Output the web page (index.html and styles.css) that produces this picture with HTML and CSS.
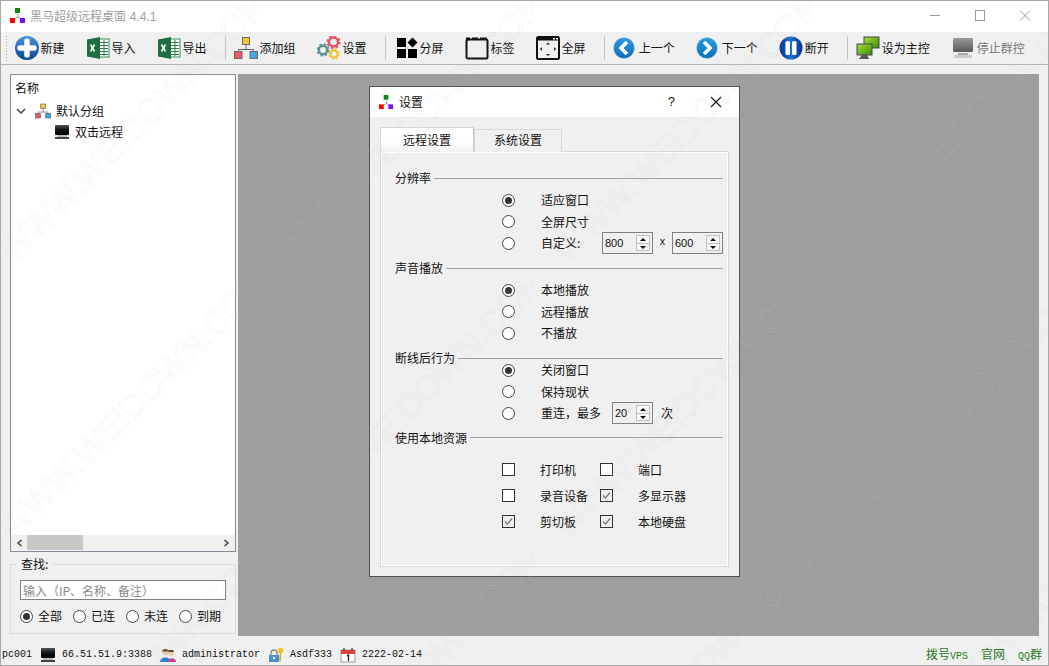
FILE: index.html
```html
<!DOCTYPE html>
<html lang="zh-CN">
<head>
<meta charset="utf-8">
<title>黑马超级远程桌面 4.4.1</title>
<link rel="stylesheet" href="styles.css">
</head>
<body>
<svg class="defs" width="0" height="0" aria-hidden="true">
  <defs>
    <linearGradient id="gPlus" x1="0" y1="0" x2="0" y2="1"><stop offset="0" stop-color="#4a93dc"/><stop offset="1" stop-color="#0b4690"/></linearGradient>
    <linearGradient id="gNav" x1="0" y1="0" x2="0" y2="1"><stop offset="0" stop-color="#2a9be0"/><stop offset="1" stop-color="#0a70b8"/></linearGradient>
    <linearGradient id="gPause" x1="0" y1="0" x2="1" y2="0"><stop offset="0" stop-color="#0a2f90"/><stop offset=".5" stop-color="#1a72d0"/><stop offset="1" stop-color="#07308c"/></linearGradient>
    <linearGradient id="gScreen" x1="0" y1="0" x2="1" y2="1"><stop offset="0" stop-color="#a4e02a"/><stop offset="1" stop-color="#3f8a10"/></linearGradient>
    <linearGradient id="gBlack" x1="0" y1="0" x2="0" y2="1"><stop offset="0" stop-color="#555"/><stop offset=".5" stop-color="#111"/><stop offset="1" stop-color="#000"/></linearGradient>
    <linearGradient id="gGrey" x1="0" y1="0" x2="0" y2="1"><stop offset="0" stop-color="#9a9a9a"/><stop offset="1" stop-color="#5a5a5a"/></linearGradient>
    <symbol id="logo" viewBox="0 0 16 16">
      <path d="M8 6v3M8 9L4 11M8 9l4 2" stroke="#999" fill="none"/>
      <rect x="5" y="0" width="5" height="5" fill="#0a8a0a"/>
      <rect x="0" y="10" width="5" height="5" fill="#f00"/>
      <rect x="10" y="10" width="5" height="5" fill="#7a10f0"/>
    </symbol>
    <symbol id="excel" viewBox="0 0 24 24">
      <rect x="11" y="3" width="12" height="18" fill="#fff" stroke="#3a8a5a"/>
      <path d="M14 6.500h8M14 9.500h8M14 12.500h8M14 15.500h8M14 18.500h8M18 4v16" stroke="#2f7d4f"/>
      <path d="M1 3.500L14 1v22L1 20.500z" fill="#1f6e42"/>
      <path d="M4.500 8.500l4 7M8.500 8.500l-4 7" stroke="#fff" stroke-width="1.600" fill="none"/>
    </symbol>
    <symbol id="net" viewBox="0 0 24 24">
      <path d="M12 8v6M4.500 15v-1.500h15V15" fill="none" stroke="#666"/>
      <rect x="8.500" y="1.500" width="7" height="7" fill="#f8c52c" stroke="#6a6a6a"/>
      <rect x="0.500" y="15.500" width="7.500" height="7" fill="#f0566a" stroke="#6a6a6a"/>
      <rect x="16" y="15.500" width="7.500" height="7" fill="#3aa8f0" stroke="#6a6a6a"/>
    </symbol>
    <symbol id="monitor" viewBox="0 0 16 16">
      <rect x="1" y="1" width="14" height="10" rx="1" fill="url(#gBlack)"/>
      <rect x="3" y="11" width="10" height="2" fill="#bbb"/>
      <rect x="1" y="13" width="14" height="2" fill="#444"/>
    </symbol>
    <symbol id="chev" viewBox="0 0 24 24">
      <circle cx="11" cy="12" r="10.500" fill="url(#gNav)" stroke="#bcd" stroke-width=".6"/>
      <path d="M14 6l-6 6 6 6" fill="none" stroke="#fff" stroke-width="3.600"/>
    </symbol>
    <pattern id="wmark" x="-20" y="0" width="277" height="277" patternUnits="userSpaceOnUse">
      <text class="wm-dark" x="33.600" y="263.800" transform="rotate(-45 33.600 263.800)">WWW.WEIDOWN.COM</text>
      <text class="wm-light" x="33" y="263" transform="rotate(-45 33 263)">WWW.WEIDOWN.COM</text>
    </pattern>
  </defs>
</svg>

<div class="win">
  <header class="titlebar">
    <svg class="title-logo" width="16" height="16"><use href="#logo"/></svg>
    <span class="title-text">黑马超级远程桌面 <span class="title-ver">4.4.1</span></span>
    <div class="wincontrols">
      <svg width="12" height="12" viewBox="0 0 12 12"><path d="M1 5.500h10" stroke="#999"/></svg>
      <svg width="12" height="12" viewBox="0 0 12 12"><rect x="1.500" y="0.500" width="9" height="10" fill="none" stroke="#999"/></svg>
      <svg width="12" height="12" viewBox="0 0 12 12"><path d="M1 0.500l10 10M11 0.500l-10 10" stroke="#999"/></svg>
    </div>
  </header>

  <nav class="toolbar">
    <span class="grip"></span>
    <div class="tool"><svg width="24" height="24" viewBox="0 0 24 24"><circle cx="12" cy="12" r="12" fill="url(#gPlus)"/><path d="M12 5v14M5 12h14" stroke="#fff" stroke-width="5.500" stroke-linecap="round"/></svg><span>新建</span></div>
    <div class="tool"><svg width="24" height="24"><use href="#excel"/></svg><span>导入</span></div>
    <div class="tool"><svg width="24" height="24"><use href="#excel"/></svg><span>导出</span></div>
    <i class="sep"></i>
    <div class="tool"><svg width="24" height="24"><use href="#net"/></svg><span>添加组</span></div>
    <div class="tool"><svg width="24" height="24" viewBox="0 0 24 24">
      <circle cx="16.500" cy="6" r="4.500" fill="none" stroke="#e8505f" stroke-width="2.400"/><circle cx="16.500" cy="6" r="6.200" fill="none" stroke="#e8505f" stroke-width="1.800" stroke-dasharray="2.400 2.450"/>
      <circle cx="6" cy="14" r="4.200" fill="none" stroke="#5a9098" stroke-width="2.400"/><circle cx="6" cy="14" r="5.800" fill="none" stroke="#5a9098" stroke-width="1.600" stroke-dasharray="2.300 2.260"/>
      <circle cx="17" cy="18" r="3.500" fill="none" stroke="#f6c62e" stroke-width="2.200"/><circle cx="17" cy="18" r="5" fill="none" stroke="#f6c62e" stroke-width="1.500" stroke-dasharray="2 1.930"/>
    </svg><span>设置</span></div>
    <i class="sep sep-wide"></i>
    <div class="tool"><svg width="22" height="24" viewBox="0 0 22 24"><rect x="1" y="2" width="9" height="9"/><rect x="1" y="13" width="9" height="9"/><rect x="12" y="13" width="9" height="9"/><path d="M16.500 1.500l5 5-5 5-5-5z"/></svg><span>分屏</span></div>
    <div class="tool"><svg width="24" height="24" viewBox="0 0 24 24"><rect x="1.500" y="3.500" width="21" height="19" rx="1.500" fill="none" stroke="#111" stroke-width="2"/><path d="M1 5V1.500h4V4zM7 1.500h6V4H7zM15 1.500h7V4h-7z" fill="#111"/></svg><span>标签</span></div>
    <div class="tool"><svg width="24" height="24" viewBox="0 0 24 24"><rect x="1" y="1" width="22" height="22" rx="1.500" fill="none" stroke="#111" stroke-width="2"/><rect x="1" y="1" width="22" height="3.500" fill="#111"/><rect x="17" y="2" width="2" height="1.500" fill="#fff"/><rect x="20" y="2" width="2" height="1.500" fill="#fff"/><path d="M12 6.500l2 2h-4zM12 20l2-2h-4zM4 13l2-2v4zM20 13l-2-2v4z" fill="#222"/></svg><span>全屏</span></div>
    <i class="sep"></i>
    <div class="tool"><svg width="24" height="24"><use href="#chev"/></svg><span>上一个</span></div>
    <div class="tool"><svg width="24" height="24" viewBox="0 0 24 24"><circle cx="11" cy="12" r="10.500" fill="url(#gNav)" stroke="#bcd" stroke-width=".6"/><path d="M8 6l6 6-6 6" fill="none" stroke="#fff" stroke-width="3.600"/></svg><span>下一个</span></div>
    <div class="tool"><svg width="24" height="24" viewBox="0 0 24 24"><circle cx="12" cy="12" r="11.500" fill="url(#gPause)"/><rect x="6.500" y="5" width="4.500" height="14" rx="1.500" fill="#fff"/><rect x="13" y="5" width="4.500" height="14" rx="1.500" fill="#fff"/></svg><span>断开</span></div>
    <i class="sep"></i>
    <div class="tool"><svg width="24" height="24" viewBox="0 0 24 24"><rect x="8" y="1" width="15" height="11" fill="url(#gScreen)" stroke="#445"/><rect x="1" y="8" width="15" height="11" fill="url(#gScreen)" stroke="#445"/><path d="M6 19h5l2 4H3z" fill="#555"/></svg><span>设为主控</span></div>
    <div class="tool tool-off"><svg width="24" height="24" viewBox="0 0 24 24"><rect x="2" y="2" width="20" height="14" rx="1.500" fill="url(#gGrey)"/><rect x="7" y="17" width="10" height="2" fill="#aaa"/><rect x="3" y="19" width="18" height="3" fill="#ccc"/></svg><span>停止群控</span></div>
  </nav>

  <main class="main">
    <aside class="side">
      <section class="tree">
        <div class="tree-body">
          <div class="tree-head">名称</div>
          <div class="tree-row">
            <svg class="tree-chev" width="10" height="10" viewBox="0 0 10 10"><path d="M1 3l4 4 4-4" fill="none" stroke="#444" stroke-width="1.500"/></svg>
            <svg class="tree-net" width="16" height="16"><use href="#net"/></svg>
            <span>默认分组</span>
          </div>
          <div class="tree-row tree-child">
            <svg width="16" height="16"><use href="#monitor"/></svg>
            <span>双击远程</span>
          </div>
        </div>
        <div class="hscroll">
          <svg width="7" height="8" viewBox="0 0 7 8"><path d="M5.500 1L2 4l3.500 3" fill="none" stroke="#444" stroke-width="1.500"/></svg>
          <span class="hthumb"></span>
          <svg width="7" height="8" viewBox="0 0 7 8"><path d="M1.500 1L5 4 1.500 7" fill="none" stroke="#444" stroke-width="1.500"/></svg>
        </div>
      </section>
      <fieldset class="find">
        <legend>查找:</legend>
        <input class="find-input" type="text" placeholder="输入（IP、名称、备注）">
        <div class="find-opts">
          <label class="find-opt"><span class="radio on"></span>全部</label>
          <label class="find-opt"><span class="radio"></span>已连</label>
          <label class="find-opt"><span class="radio"></span>未连</label>
          <label class="find-opt"><span class="radio"></span>到期</label>
        </div>
      </fieldset>
    </aside>

    <div class="canvas">
      <div class="dialog">
        <div class="dlg-title">
          <svg width="15" height="15"><use href="#logo"/></svg>
          <span class="dlg-name">设置</span>
          <span class="dlg-help">?</span>
          <svg class="dlg-close" width="12" height="12" viewBox="0 0 12 12"><path d="M1 1l10 10M11 1L1 11" stroke="#111" stroke-width="1.100"/></svg>
        </div>
        <div class="dlg-body">
          <div class="tabs">
            <span class="tab tab-on">远程设置</span>
            <span class="tab">系统设置</span>
          </div>
          <div class="pane">
            <h3 class="sect">分辨率</h3>
            <div class="row"><span class="radio on"></span><span>适应窗口</span></div>
            <div class="row"><span class="radio"></span><span>全屏尺寸</span></div>
            <div class="row"><span class="radio"></span><span class="lbl-custom">自定义:</span>
              <span class="spin"><b>800</b><span class="spin-btn"><i class="up"></i><i class="down"></i></span></span>
              <span class="times">x</span>
              <span class="spin"><b>600</b><span class="spin-btn"><i class="up"></i><i class="down"></i></span></span>
            </div>

            <h3 class="sect">声音播放</h3>
            <div class="row"><span class="radio on"></span><span>本地播放</span></div>
            <div class="row"><span class="radio"></span><span>远程播放</span></div>
            <div class="row"><span class="radio"></span><span>不播放</span></div>

            <h3 class="sect">断线后行为</h3>
            <div class="row row-tight"><span class="radio on"></span><span>关闭窗口</span></div>
            <div class="row"><span class="radio"></span><span>保持现状</span></div>
            <div class="row"><span class="radio"></span><span class="lbl-retry">重连，最多</span>
              <span class="spin spin-small"><b>20</b><span class="spin-btn"><i class="up"></i><i class="down"></i></span></span>
              <span class="times-cn">次</span>
            </div>

            <h3 class="sect">使用本地资源</h3>
            <div class="checks">
              <div class="check"><span class="box"></span>打印机</div>
              <div class="check"><span class="box"></span>端口</div>
              <div class="check"><span class="box"></span>录音设备</div>
              <div class="check"><span class="box on"><svg width="11" height="11" viewBox="0 0 11 11"><path d="M2 5.500l2.500 2.500L9 2.500" fill="none" stroke="#777" stroke-width="1.200"/></svg></span>多显示器</div>
              <div class="check"><span class="box on"><svg width="11" height="11" viewBox="0 0 11 11"><path d="M2 5.500l2.500 2.500L9 2.500" fill="none" stroke="#777" stroke-width="1.200"/></svg></span>剪切板</div>
              <div class="check"><span class="box on"><svg width="11" height="11" viewBox="0 0 11 11"><path d="M2 5.500l2.500 2.500L9 2.500" fill="none" stroke="#777" stroke-width="1.200"/></svg></span>本地硬盘</div>
            </div>
          </div>
        </div>
      </div>
    </div>
  </main>

  <footer class="status">
    <span class="mono">pc001</span>
    <span class="stat"><svg width="16" height="16"><use href="#monitor"/></svg><span class="mono">66.51.51.9:3388</span></span>
    <span class="stat"><svg width="16" height="16" viewBox="0 0 16 16"><circle cx="5.500" cy="5" r="3.200" fill="#f0c8a0"/><path d="M2 4.500C2 1 9 1 9 4.500z" fill="#6a4a30"/><path d="M0 15c0-6 11-6 11 0z" fill="#2a80d0"/><circle cx="11" cy="6" r="2.800" fill="#f0c8a0"/><path d="M8 5c0-3 6-3 6 0z" fill="#444"/><path d="M8 15c0-5 8-5 8 0z" fill="#d04090"/></svg><span class="mono">administrator</span></span>
    <span class="stat"><svg width="16" height="16" viewBox="0 0 16 16"><path d="M3 8V6a3 3 0 016 0v2" fill="none" stroke="#888" stroke-width="1.300"/><rect x="1" y="8" width="10" height="7" fill="#4a90d8"/><circle cx="6" cy="11" r="1.200" fill="#fff"/><circle cx="12.500" cy="3.500" r="2.800" fill="#f5c52c"/><path d="M11.800 5.500h1.400v7l-1 2-1-1z" fill="#e0a820"/></svg><span class="mono">Asdf333</span></span>
    <span class="stat"><svg width="16" height="16" viewBox="0 0 16 16"><rect x="1" y="3" width="14" height="12" fill="#fff" stroke="#999"/><rect x="1" y="3" width="14" height="4" fill="#e0403a"/><path d="M4 1v3M12 1v3" stroke="#555" stroke-width="1.400"/><path d="M7 9l1.500-1v6" fill="none" stroke="#222" stroke-width="1.300"/></svg><span class="mono">2222-02-14</span></span>
    <span class="links">
      <span>拨号<span class="mono">VPS</span></span>
      <span>官网</span>
      <span><span class="mono">QQ</span>群</span>
    </span>
  </footer>

  <svg class="watermark" width="1049" height="666" aria-hidden="true"><rect width="1049" height="666" fill="url(#wmark)"/></svg>
</div>
</body>
</html>
```

FILE: styles.css
```css
* { box-sizing: border-box; }
html, body { margin: 0; padding: 0; }
body {
  font-family: "Noto Sans CJK SC", "Liberation Sans", sans-serif;
  font-size: 12px;
  line-height: 16px;
  color: #111;
  background: #f0f0f0;
}
.defs { position: absolute; }
.win {
  position: relative;
  width: 1049px;
  height: 666px;
  border: 1px solid #a8a8a8;
  display: flex;
  flex-direction: column;
  overflow: hidden;
  background: #f0f0f0;
}
svg { display: block; flex: none; }

/* Title bar */
.titlebar {
  height: 31px;
  flex: none;
  background: #fff;
  display: flex;
  align-items: center;
  padding-left: 9px;
}
.title-logo { margin-right: 4px; margin-top: -2px; }
.title-text { color: #a0a0a0; }
.title-ver { font-family: "Liberation Sans", sans-serif; margin-left: 1px; }
.wincontrols {
  margin-left: auto;
  display: flex;
  gap: 33px;
  padding-right: 17px;
  margin-top: -1px;
}

/* Toolbar */
.toolbar {
  height: 33px;
  flex: none;
  display: flex;
  align-items: center;
  background: #f0f0f0;
  border-bottom: 1px solid #b4b4b4;
  padding-left: 4px;
}
.grip {
  width: 3px;
  height: 26px;
  margin-right: 7px;
  background-image: radial-gradient(circle, #aaa 1px, transparent 1px);
  background-size: 3px 3px;
}
.tool {
  display: flex;
  align-items: center;
  gap: 1.500px;
  margin-right: 21.500px;
  white-space: nowrap;
}
.tool-off { color: #777; margin-right: 0; }
.sep {
  width: 1px;
  height: 24px;
  background: #c4c4c4;
  margin-left: -3px;
  margin-right: 8px;
}
.sep-wide { margin-right: 10px; }

/* Main area */
.main {
  flex: 1;
  min-height: 0;
  display: flex;
  padding: 9px 9px 0 9px;
  gap: 2px;
}
.side {
  width: 226px;
  flex: none;
  display: flex;
  flex-direction: column;
}
.tree {
  height: 478px;
  flex: none;
  border: 1px solid #8a8a9a;
  background: #fff;
  display: flex;
  flex-direction: column;
}
.tree-body { flex: 1; }
.tree-head { height: 25px; line-height: 25px; padding-left: 4px; }
.tree-row { height: 21px; display: flex; align-items: center; padding-left: 5px; }
.tree-chev { margin-right: 9px; }
.tree-net { margin-right: 4px; }
.tree-row span { margin-left: 1px; }
.tree-child { padding-left: 43px; }
.tree-child span { margin-left: 5px; }
.hscroll {
  height: 16px;
  flex: none;
  background: #f0f0f0;
  display: flex;
  align-items: center;
  padding: 0 5px;
}
.hthumb { width: 56px; height: 15px; background: #c8c8c8; margin-left: 4px; margin-right: auto; align-self: flex-start; }
.find {
  margin: 4px 0 0;
  padding: 8px 9px 0;
  height: 78px;
  border: 1px solid #dcdcdc;
  min-inline-size: 0;
}
.find legend { padding: 0 5px; margin-left: -4px; line-height: 16px; }
.find-input {
  width: 206px;
  height: 20px;
  display: block;
  padding: 0 2px;
  border: 1px solid #808080;
  background: #fff;
  font: inherit;
  margin-top: 0;
}
.find-input::placeholder { color: #8a8a8a; opacity: 1; }
.find-opts { display: flex; margin-top: 8px; }
.find-opt { display: flex; align-items: center; gap: 5px; width: 53px; flex: none; }

/* Radio */
.radio {
  width: 13px;
  height: 13px;
  border: 1px solid #444;
  border-radius: 50%;
  background: #fff;
  flex: none;
  position: relative;
}
.radio.on::after {
  content: "";
  position: absolute;
  left: 2px;
  top: 2px;
  width: 7px;
  height: 7px;
  border-radius: 50%;
  background: #333;
}

/* Canvas */
.canvas {
  flex: 1;
  height: 562px;
  background: #9e9e9e;
  position: relative;
}
.dialog {
  position: absolute;
  left: 131px;
  top: 12px;
  width: 371px;
  height: 491px;
  border: 1px solid #505050;
  background: #f0f0f0;
  display: flex;
  flex-direction: column;
}
.dlg-title {
  height: 30px;
  flex: none;
  background: #fff;
  display: flex;
  align-items: center;
  padding-left: 9px;
}
.dlg-name { margin-left: 5px; }
.dlg-help { margin-left: auto; font-family: "Liberation Sans", sans-serif; font-size: 13px; margin-right: 35px; }
.dlg-close { margin-right: 17px; }
.dlg-body { flex: 1; padding: 10px 10px 0; }
.tabs { display: flex; align-items: flex-start; height: 25px; position: relative; margin-bottom: -1px; }
.tab {
  width: 88px;
  height: 23px;
  margin-top: 2px;
  line-height: 20px;
  text-align: center;
  border: 1px solid #d8d8d8;
  border-bottom: 0;
  background: #f0f0f0;
}
.tab-on {
  width: 94px;
  height: 25px;
  margin-top: 0;
  line-height: 23px;
  background: linear-gradient(#fff 60%, #f0f0f0);
  position: relative;
  z-index: 1;
  border-right-color: #c8c8c8;
}
.pane {
  height: 416px;
  width: 349px;
  border: 1px solid #d8d8d8;
  box-shadow: inset 0 0 0 1px #fff;
  padding: 18px 5px 0 14px;
}
.sect {
  margin: 6px 0 3.500px;
  font-weight: normal;
  font-size: 12px;
  line-height: 16px;
  height: 16px;
  display: flex;
  align-items: center;
  gap: 3px;
}
.pane > .sect:first-child { margin-top: 0; }
.sect::after { content: ""; flex: 1; height: 1px; background: #a0a0a0; }
.row {
  height: 21.500px;
  display: flex;
  align-items: center;
  padding-left: 107px;
}
.row-tight { margin-top: -10.250px; }
.row .radio { margin-right: 26px; }
.lbl-custom { width: 61px; }
.lbl-retry { width: 71px; }
.spin {
  width: 51px;
  height: 22px;
  border: 1px solid #808080;
  background: #f0f0f0;
  display: flex;
  align-items: center;
  font-family: "Liberation Sans", sans-serif;
  padding-left: 2px;
}
.spin b { font-weight: normal; flex: 1; font-size: 11px; }
.spin-small { width: 41px; }
.spin-btn {
  width: 14px;
  height: 16px;
  margin-right: 2px;
  display: flex;
  flex-direction: column;
  border: 1px solid #c0c0c0;
  background: #f8f8f8;
}
.spin-btn i { flex: 1; display: block; position: relative; }
.spin-btn i::after {
  content: "";
  position: absolute;
  left: 3px;
  border-left: 3.500px solid transparent;
  border-right: 3.500px solid transparent;
}
.spin-btn .up { border-bottom: 1px solid #c0c0c0; }
.spin-btn .up::after { top: 2px; border-bottom: 3px solid #111; }
.spin-btn .down::after { top: 2px; border-top: 3px solid #111; }
.times {
  width: 19px;
  text-align: center;
  font-family: "Liberation Mono", monospace;
  font-size: 10px;
}
.times-cn { margin-left: 8px; }
.checks {
  display: grid;
  grid-template-columns: 98px 98px;
  grid-auto-rows: 26px;
  margin: 11px 0 0 107px;
}
.check { display: flex; align-items: center; white-space: nowrap; }
.box {
  width: 13px;
  height: 13px;
  border: 1px solid #333;
  background: #fff;
  margin-right: 25px;
  flex: none;
}
.box.on { background: #f0f0f0; }

/* Status bar */
.status {
  height: 28px;
  flex: none;
  display: flex;
  align-items: center;
  gap: 8px;
  padding: 8px 6px 0 1px;
}
.mono { font-family: "Liberation Mono", monospace; font-size: 10px; }
.stat { display: flex; align-items: center; gap: 6px; }
.links { margin-left: auto; display: flex; gap: 13px; color: #1c7a1c; }

/* Watermark */
.watermark { position: absolute; left: -1px; top: -1px; pointer-events: none; }
.wm-light, .wm-dark {
  font-family: "Liberation Sans", sans-serif;
  font-size: 34px;
  fill: none;
  stroke-width: 1px;
}
.wm-light { stroke: rgba(255, 255, 255, 0.09); }
.wm-dark { stroke: rgba(0, 0, 0, 0.035); }
```
